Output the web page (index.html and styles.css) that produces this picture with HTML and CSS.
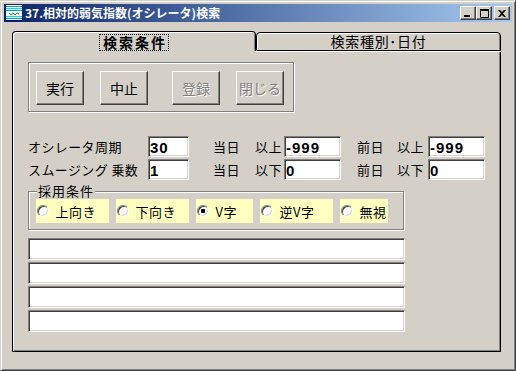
FILE: index.html
```html
<!DOCTYPE html>
<html lang="ja">
<head>
    <meta charset="UTF-8">
    <meta name="viewport" content="width=device-width, initial-scale=1.0">
    <title>37.相対的弱気指数(オシレータ)検索</title>
    <link rel="stylesheet" href="styles.css">
</head>
<body>
    <div class="window">
        <div class="titlebar">
            <svg class="app-icon" width="16" height="16" viewBox="0 0 16 16">
                <rect x="0" y="0" width="16" height="16" fill="#ffffff"/>
                <rect x="0" y="1" width="16" height="1" fill="#00a0c0"/>
                <rect x="0" y="3" width="16" height="1" fill="#00e0f0"/>
                <rect x="0" y="5" width="16" height="1" fill="#00a0c0"/>
                <rect x="0" y="11" width="16" height="1" fill="#00e0f0"/>
                <rect x="0" y="13" width="16" height="1" fill="#00a0c0"/>
                <rect x="0" y="15" width="16" height="1" fill="#000080"/>
                <path d="M3 8 L5 10 L7 8 L9 10 L11 8 L13 9" stroke="#00a000" stroke-width="1" fill="none"/>
            </svg>
            <span class="title-text">37.相対的弱気指数(オシレータ)検索</span>
            <div class="caption-buttons">
                <button class="cap-btn">
                    <svg width="8" height="7" viewBox="0 0 8 7"><rect x="0" y="5" width="6" height="2" fill="#000"/></svg>
                </button>
                <button class="cap-btn">
                    <svg width="9" height="9" viewBox="0 0 9 9"><path d="M0.5 1.5 H8.5 V8.5 H0.5 Z" stroke="#000" fill="none"/><rect x="0" y="0" width="9" height="2" fill="#000"/></svg>
                </button>
                <button class="cap-btn close">
                    <svg width="8" height="7" viewBox="0 0 8 7"><path d="M0 0 L2 0 L4 2 L6 0 L8 0 L5 3.5 L8 7 L6 7 L4 5 L2 7 L0 7 L3 3.5 Z" fill="#000"/></svg>
                </button>
            </div>
        </div>

        <div class="tabctl">
            <div class="tabs">
                <div class="tab active"><span class="focus">検索条件</span></div>
                <div class="tab">検索種別･日付</div>
            </div>
            <div class="panel">
                <div class="cmd-frame">
                    <button class="cmd">実行</button>
                    <button class="cmd stop">中止</button>
                    <button class="cmd reg" disabled>登録</button>
                    <button class="cmd close-btn" disabled>閉じる</button>
                </div>

                <div class="params">
                    <span class="lbl">オシレータ周期</span>
                    <input class="edit num" type="text" value="30">
                    <span class="lbl">当日</span>
                    <span class="lbl">以上</span>
                    <input class="edit wide" type="text" value="-999">
                    <span class="lbl">前日</span>
                    <span class="lbl">以上</span>
                    <input class="edit wide" type="text" value="-999">

                    <span class="lbl">スムージング 乗数</span>
                    <input class="edit num" type="text" value="1">
                    <span class="lbl">当日</span>
                    <span class="lbl">以下</span>
                    <input class="edit wide" type="text" value="0">
                    <span class="lbl">前日</span>
                    <span class="lbl">以下</span>
                    <input class="edit wide" type="text" value="0">
                </div>

                <fieldset class="group">
                    <legend>採用条件</legend>
                    <label class="option w73"><input type="radio" name="cond"> 上向き</label>
                    <label class="option w73"><input type="radio" name="cond"> 下向き</label>
                    <label class="option w57"><input type="radio" name="cond" checked> V字</label>
                    <label class="option w73"><input type="radio" name="cond"> 逆V字</label>
                    <label class="option w48"><input type="radio" name="cond"> 無視</label>
                </fieldset>

                <div class="lines">
                    <input class="edit line" type="text">
                    <input class="edit line" type="text">
                    <input class="edit line" type="text">
                    <input class="edit line" type="text">
                </div>
            </div>
        </div>
    </div>
</body>
</html>
```

FILE: styles.css
```css
html, body {
    margin: 0;
    padding: 0;
    background-color: #d4d0c8;
}

body {
    font-family: "Noto Sans CJK JP", "Liberation Sans", sans-serif;
    font-size: 13px;
    color: #000;
}

.window {
    width: 516px;
    height: 371px;
    box-sizing: border-box;
    background-color: #d4d0c8;
    border: 1px solid;
    border-color: #d4d0c8 #404040 #404040 #d4d0c8;
    box-shadow: inset 1px 1px 0 #ffffff, inset -1px -1px 0 #808080;
    padding: 3px;
}

/* title bar */
.titlebar {
    height: 18px;
    display: flex;
    align-items: center;
    background: linear-gradient(to right, #0a246a, #a6caf0);
}

.app-icon {
    margin-left: 2px;
    flex-shrink: 0;
}

.title-text {
    margin-left: 3px;
    color: #ffffff;
    font-weight: bold;
    font-size: 12px;
    line-height: 18px;
    white-space: nowrap;
}

.caption-buttons {
    margin-left: auto;
    margin-right: 2px;
    display: flex;
}

.cap-btn {
    width: 16px;
    height: 14px;
    padding: 0;
    display: flex;
    align-items: center;
    justify-content: center;
    background-color: #d4d0c8;
    border: 1px solid;
    border-color: #ffffff #404040 #404040 #ffffff;
    box-shadow: inset -1px -1px 0 #808080;
}

.cap-btn.close {
    margin-left: 2px;
}

/* tab control */
.tabctl {
    margin: 9px 0 0 8px;
    width: 489px;
}

.tabs {
    display: flex;
    align-items: flex-end;
}

.tab {
    box-sizing: border-box;
    width: 245px;
    height: 19px;
    border: 1px solid #000;
    border-radius: 4px 4px 0 0;
    box-shadow: inset 1px 1px 0 #ffffff, inset -1px 0 0 #808080, 0 1px 0 #ffffff;
    text-align: center;
    font-size: 14px;
    line-height: 17px;
    letter-spacing: 0.7px;
}

.tab.active {
    width: 244px;
    height: 20px;
    border-bottom: none;
    box-shadow: inset 1px 1px 0 #ffffff, inset -1px 0 0 #808080;
    font-weight: bold;
    letter-spacing: 2px;
    line-height: 19px;
    position: relative;
    z-index: 1;
}

.focus {
    display: inline-block;
    outline: 1px dotted #000;
    padding: 0 1px 0 3px;
    line-height: 15px;
    margin-top: 3px;
}

.panel {
    box-sizing: border-box;
    height: 301px;
    border: 1px solid #000;
    border-top: none;
    box-shadow: inset 1px 0 0 #ffffff, inset -1px -1px 0 #808080;
    padding: 11px 0 0 15px;
}

/* command buttons */
.cmd-frame {
    box-sizing: border-box;
    width: 266px;
    height: 50px;
    border: 1px solid #808080;
    box-shadow: 1px 1px 0 #ffffff, inset 1px 1px 0 #ffffff;
    padding: 8px 0 0 7px;
    display: flex;
    align-items: flex-start;
}

.cmd {
    box-sizing: border-box;
    width: 48px;
    height: 34px;
    padding: 0;
    font-family: "Noto Sans CJK JP", sans-serif;
    font-size: 14px;
    color: #000;
    background-color: #d4d0c8;
    border: 1px solid;
    border-color: #ffffff #404040 #404040 #ffffff;
    box-shadow: inset -1px -1px 0 #808080;
}

.cmd.stop { margin-left: 16px; }
.cmd.reg { margin-left: 24px; }
.cmd.close-btn { margin-left: 16px; }

.cmd:disabled {
    color: #808080;
    text-shadow: 1px 1px 0 #ffffff;
}

/* parameter rows */
.params {
    margin-top: 24px;
    display: grid;
    grid-template-columns: 120px 65px 42px 29px 73px 40px 31px 56px;
    grid-auto-rows: 21px;
    row-gap: 2px;
    align-items: center;
}

.lbl {
    font-size: 13px;
    letter-spacing: 0.4px;
    white-space: nowrap;
    line-height: 15px;
}

.edit {
    box-sizing: border-box;
    height: 21px;
    margin: 0;
    padding: 2px 0 0 1px;
    background-color: #ffffff;
    border: 1px solid;
    border-color: #808080 #ffffff #ffffff #808080;
    box-shadow: inset 1px 1px 0 #404040, inset -1px -1px 0 #d4d0c8;
    font-family: "Liberation Sans", sans-serif;
    font-weight: bold;
    font-size: 15px;
    letter-spacing: 1px;
    color: #000;
    outline: none;
}

.edit.num { width: 41px; }
.edit.wide { width: 57px; }

/* group box */
.group {
    box-sizing: border-box;
    width: 376px;
    margin: 4px 0 0 0;
    padding: 1px 0 6px 7px;
    border: 1px solid #808080;
    box-shadow: 1px 1px 0 #ffffff, inset 1px 1px 0 #ffffff;
    display: flex;
    gap: 7px;
    min-inline-size: 0;
}

.group legend {
    padding: 0 1px;
    margin-left: 1px;
    font-size: 13px;
    line-height: 14px;
    letter-spacing: 1px;
    background-color: #d4d0c8;
}

.option {
    box-sizing: border-box;
    height: 24px;
    display: flex;
    align-items: center;
    padding-left: 1px;
    background-color: #ffffc0;
    font-size: 13px;
    letter-spacing: 0.5px;
    white-space: pre;
}

.w73 { width: 73px; }
.w57 { width: 57px; }
.w48 { width: 48px; }

.option input {
    -webkit-appearance: none;
    appearance: none;
    box-sizing: border-box;
    width: 12px;
    height: 12px;
    margin: 0 3px 0 0;
    border-radius: 50%;
    border: 1px solid;
    border-color: #808080 #ffffff #ffffff #808080;
    background-color: #ffffff;
    box-shadow: inset 1px 1px 0 #404040, inset -1px -1px 0 #d4d0c8;
}

.option input:checked {
    background: radial-gradient(circle, #000 0 2px, #ffffff 2.5px);
}

/* long edit lines */
.lines {
    margin-top: 8px;
    display: flex;
    flex-direction: column;
    gap: 2px;
}

.edit.line {
    width: 377px;
    height: 22px;
}
```
